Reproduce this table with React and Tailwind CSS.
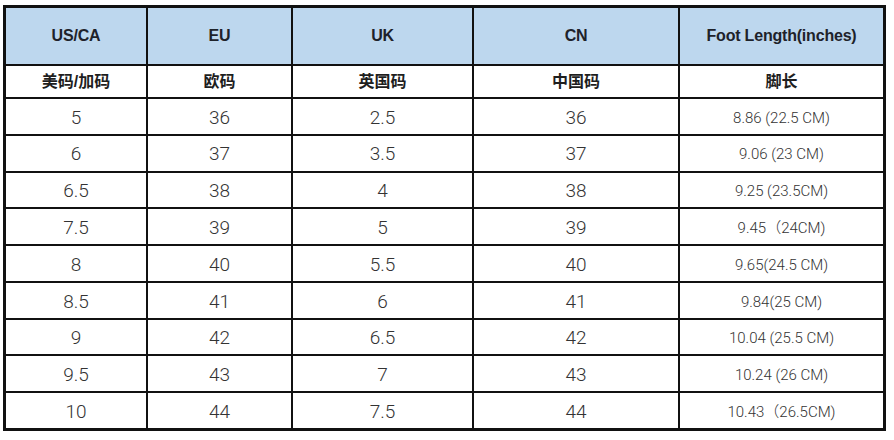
import React from 'react';

const heads = ['US/CA', 'EU', 'UK', 'CN', 'Foot Length(inches)'];
const subs = ['美码/加码', '欧码', '英国码', '中国码', '脚长'];

const rows = [
  ['5', '36', '2.5', '36', '8.86 (22.5 CM)'],
  ['6', '37', '3.5', '37', '9.06 (23 CM)'],
  ['6.5', '38', '4', '38', '9.25 (23.5CM)'],
  ['7.5', '39', '5', '39', '9.45（24CM)'],
  ['8', '40', '5.5', '40', '9.65(24.5 CM)'],
  ['8.5', '41', '6', '41', '9.84(25 CM)'],
  ['9', '42', '6.5', '42', '10.04 (25.5 CM)'],
  ['9.5', '43', '7', '43', '10.24 (26 CM)'],
  ['10', '44', '7.5', '44', '10.43（26.5CM)'],
];

const cell = 'flex items-center justify-center bg-white';

export default function App() {
  return (
    <div className="w-[894px] h-[440px] bg-white pt-[5px] pl-[3px]">
      <div className="w-[883px] h-[426px] border-[3px] border-[#111] bg-[#111] grid gap-[2px] grid-cols-[140px_143px_179px_204px_203px] grid-rows-[56px_31px_repeat(9,minmax(0,1fr))]">
        {/* header row */}
        {heads.map((h) => (
          <div
            key={h}
            className="flex items-center justify-center bg-[#bdd7ee] text-[16px] font-bold text-[#1e222a] tracking-[-0.2px] font-['Liberation_Sans',Arial,sans-serif]"
          >
            {h}
          </div>
        ))}
        {subs.map((s) => (
          <div
            key={s}
            className={`${cell} pt-[1px] text-[16px] font-bold text-[#1e1e1e] font-['Liberation_Sans','Noto_Sans_CJK_SC',sans-serif]`}
          >
            {s}
          </div>
        ))}
        {rows.map((r, i) =>
          r.map((v, j) => (
            <div
              key={i + '-' + j}
              className={`${cell} pt-[3px] font-light text-[#333] font-['Roboto','Noto_Sans_CJK_SC',sans-serif] ${j === 4 ? 'text-[15px]' : 'text-[19px]'}`}
            >
              {v}
            </div>
          ))
        )}
      </div>
    </div>
  );
}
